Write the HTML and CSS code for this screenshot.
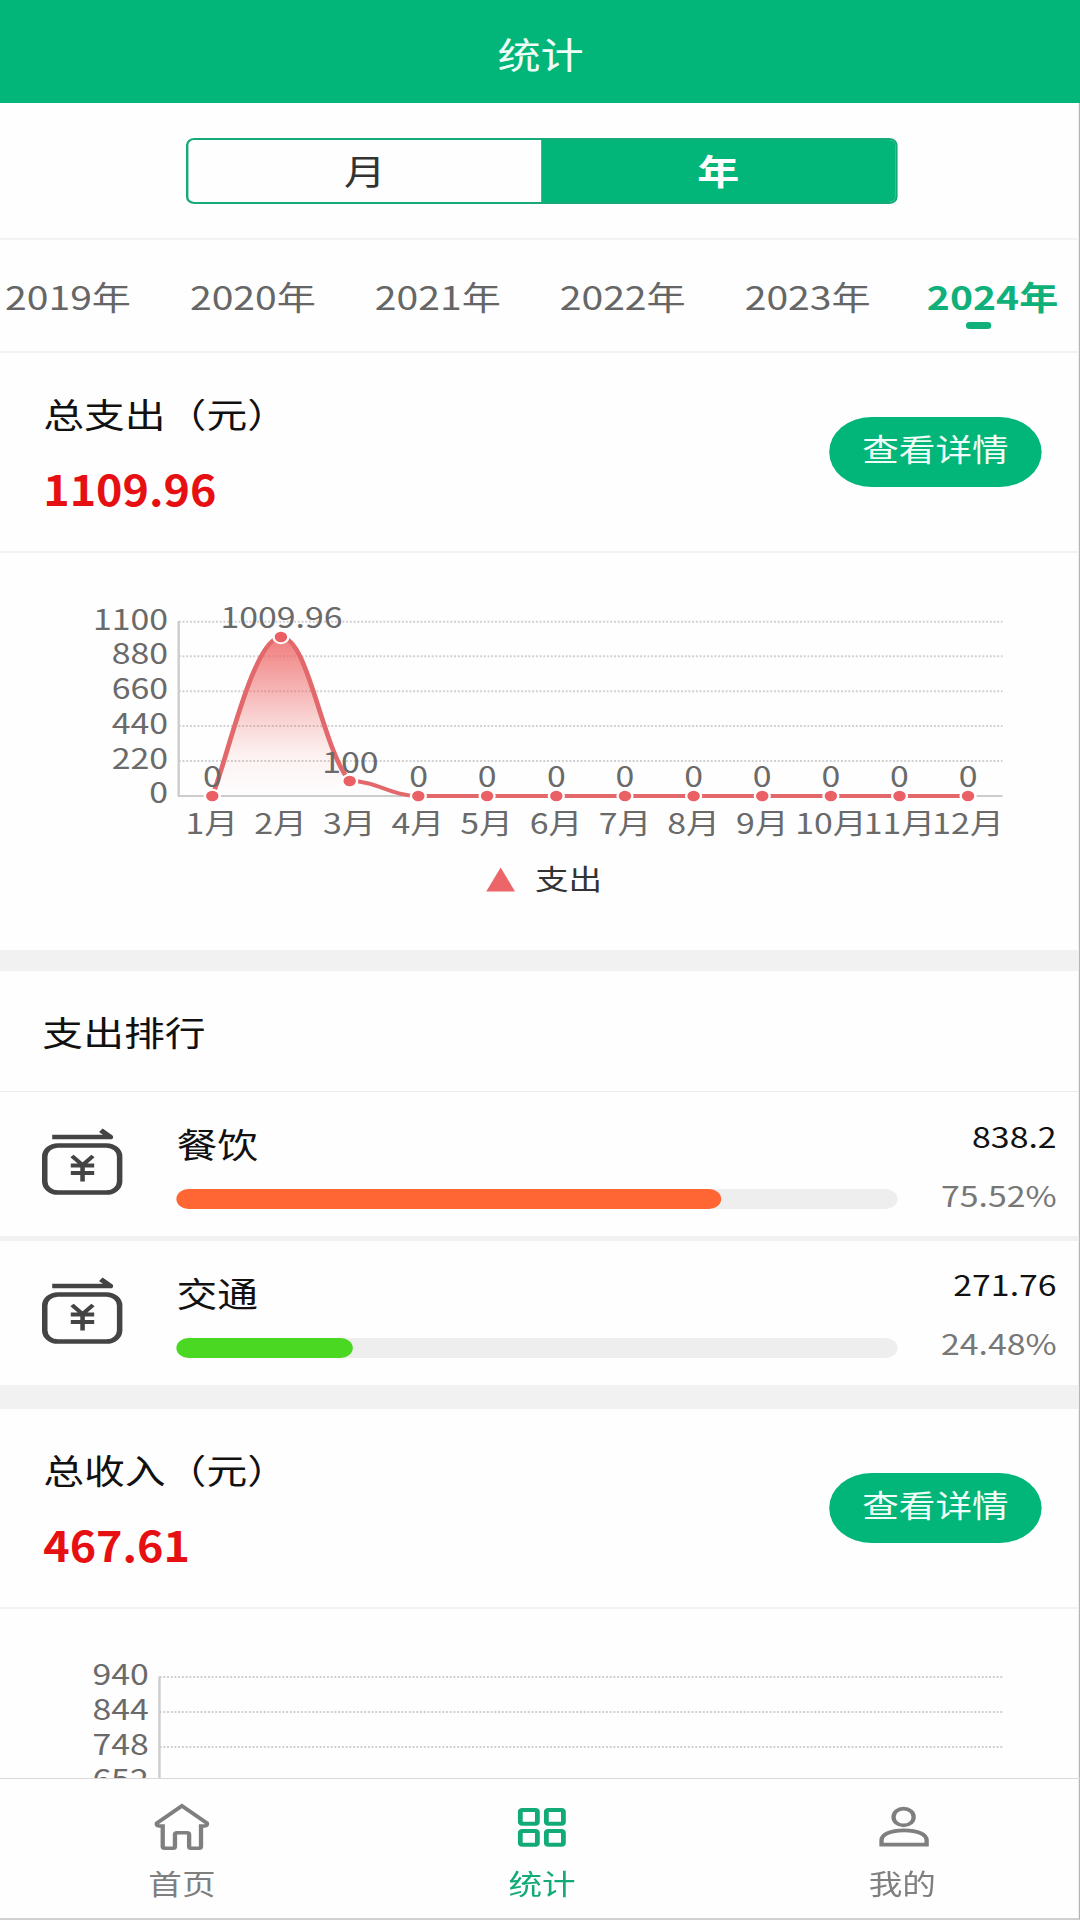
FILE: index.html
```html
<!DOCTYPE html>
<html lang="zh-CN">
<head>
<meta charset="UTF-8">
<title>统计</title>
<link rel="stylesheet" href="styles.css">
</head>
<body>
<div class="app">
  <header class="navbar">统计</header>

  <main class="content">
    <div class="switch">
      <div class="segment">
        <div class="segment-item">月</div>
        <div class="segment-item active">年</div>
      </div>
    </div>

    <nav class="years">
      <span class="year">2019年</span>
      <span class="year">2020年</span>
      <span class="year">2021年</span>
      <span class="year">2022年</span>
      <span class="year">2023年</span>
      <span class="year active">2024年</span>
    </nav>

    <section class="summary">
      <div class="summary-text">
        <div class="summary-title">总支出（元）</div>
        <div class="summary-amount">1109.96</div>
      </div>
      <div class="detail-btn">查看详情</div>
    </section>

    <section class="chart">
      <svg class="chart-svg" width="900" height="397" viewBox="0 0 900 397">
        <defs>
          <linearGradient id="area" x1="0" y1="84" x2="0" y2="243" gradientUnits="userSpaceOnUse">
            <stop offset="0" stop-color="#ee6666" stop-opacity="0.85"/>
            <stop offset="0.5" stop-color="#ee6666" stop-opacity="0.3"/>
            <stop offset="0.75" stop-color="#ee6666" stop-opacity="0.08"/>
            <stop offset="1" stop-color="#ee6666" stop-opacity="0"/>
          </linearGradient>
        </defs>
        <g class="grid">
          <path d="M149 68.7H835.4M149 103.2H835.4M149 138.2H835.4M149 173H835.4M149 208H835.4"/>
        </g>
        <path class="axis" d="M148.9 68V243H835.4"/>
        <g class="label end">
          <text x="140" y="77">1100</text>
          <text x="140" y="111.3">880</text>
          <text x="140" y="145.8">660</text>
          <text x="140" y="180.7">440</text>
          <text x="140" y="215.7">220</text>
          <text x="140" y="250.4">0</text>
        </g>
        <path fill="url(#area)" d="M176.9 243C188.3 211 211.2 84 234.1 84C257 84 268.5 196.2 291.4 228C314.3 228 325.7 243 348.6 243Z"/>
        <path class="curve" d="M176.9 243C188.3 211 211.2 84 234.1 84C257 84 268.5 196.2 291.4 228C314.3 228 325.7 243 348.6 243H806.6"/>
        <g class="dots">
          <circle cx="176.9" cy="243" r="6.2"/>
          <circle cx="234.1" cy="84" r="6.2"/>
          <circle cx="291.4" cy="228" r="6.2"/>
          <circle cx="348.6" cy="243" r="6.2"/>
          <circle cx="405.9" cy="243" r="6.2"/>
          <circle cx="463.6" cy="243" r="6.2"/>
          <circle cx="520.8" cy="243" r="6.2"/>
          <circle cx="578" cy="243" r="6.2"/>
          <circle cx="635.2" cy="243" r="6.2"/>
          <circle cx="692.4" cy="243" r="6.2"/>
          <circle cx="749.6" cy="243" r="6.2"/>
          <circle cx="806.7" cy="243" r="6.2"/>
        </g>
        <g class="label mid">
          <text x="177" y="233.7">0</text>
          <text x="234.6" y="75.3">1009.96</text>
          <text x="291.9" y="219.7">100</text>
          <text x="348.8" y="233.7">0</text>
          <text x="405.9" y="233.7">0</text>
          <text x="463.6" y="233.7">0</text>
          <text x="520.8" y="233.7">0</text>
          <text x="578" y="233.7">0</text>
          <text x="635.2" y="233.7">0</text>
          <text x="692.4" y="233.7">0</text>
          <text x="749.6" y="233.7">0</text>
          <text x="806.7" y="233.7">0</text>
        </g>
        <g class="label mid">
          <text x="176.5" y="281.3">1月</text>
          <text x="233.8" y="281.3">2月</text>
          <text x="291" y="281.3">3月</text>
          <text x="348.2" y="281.3">4月</text>
          <text x="405.5" y="281.3">5月</text>
          <text x="463.3" y="281.3">6月</text>
          <text x="520.8" y="281.3">7月</text>
          <text x="578" y="281.3">8月</text>
          <text x="635.2" y="281.3">9月</text>
          <text x="692.4" y="281.3">10月</text>
          <text x="749.6" y="281.3">11月</text>
          <text x="806.7" y="281.3">12月</text>
        </g>
        <path class="marker" d="M417.2 314.5L429.2 338.5H405.2Z"/>
        <text class="legend" x="445.8" y="337">支出</text>
      </svg>
    </section>

    <section class="rank">
      <h2 class="rank-title">支出排行</h2>
      <div class="rank-row">
        <svg class="rank-icon" width="68" height="72" viewBox="0 0 68 72">
          <rect x="2.3" y="19.5" width="62.4" height="47" rx="11"/>
          <path d="M8.5 11H57L49 4.2"/>
          <path class="yen" d="M25 30L33.8 39L42.5 30M24 39.5H43.5M24 47H43.5M33.8 39V55.5"/>
        </svg>
        <div class="rank-main">
          <div class="rank-name">餐饮</div>
          <div class="bar"><div class="bar-fill orange" style="width:75.52%"></div></div>
        </div>
        <div class="rank-nums">
          <div class="rank-amount">838.2</div>
          <div class="rank-pct">75.52%</div>
        </div>
      </div>
      <div class="rank-row">
        <svg class="rank-icon" width="68" height="72" viewBox="0 0 68 72">
          <rect x="2.3" y="19.5" width="62.4" height="47" rx="11"/>
          <path d="M8.5 11H57L49 4.2"/>
          <path class="yen" d="M25 30L33.8 39L42.5 30M24 39.5H43.5M24 47H43.5M33.8 39V55.5"/>
        </svg>
        <div class="rank-main">
          <div class="rank-name">交通</div>
          <div class="bar"><div class="bar-fill green" style="width:24.48%"></div></div>
        </div>
        <div class="rank-nums">
          <div class="rank-amount">271.76</div>
          <div class="rank-pct">24.48%</div>
        </div>
      </div>
    </section>

    <section class="summary">
      <div class="summary-text">
        <div class="summary-title">总收入（元）</div>
        <div class="summary-amount">467.61</div>
      </div>
      <div class="detail-btn">查看详情</div>
    </section>

    <section class="chart income">
      <svg class="chart-svg" width="900" height="397" viewBox="0 0 900 397">
        <g class="grid">
          <path d="M133 68H835.4M133 103H835.4M133 138H835.4"/>
        </g>
        <path class="axis" d="M132.9 67.5V243"/>
        <g class="label end">
          <text x="124" y="76">940</text>
          <text x="124" y="111.3">844</text>
          <text x="124" y="145.8">748</text>
          <text x="124" y="180.7">652</text>
        </g>
      </svg>
    </section>
  </main>

  <footer class="tabbar">
    <div class="tab">
      <svg class="tab-icon" width="48" height="48" viewBox="1.2 0 48 48">
        <path d="M24.8 2.8L45.6 20Q46.6 22.6 43.5 23H40.7V43.5Q40.7 45.3 39 45.3H32.3Q30.8 45.3 30.8 43.5V31.5Q30.8 29.8 29.2 29.8H20.6Q19 29.8 19 31.5V43.5Q19 45.3 17.4 45.3H10.5Q8.8 45.3 8.8 43.5V23H6Q2.9 22.6 4 20Z"/>
      </svg>
      <span class="tab-label">首页</span>
    </div>
    <div class="tab active">
      <svg class="tab-icon" width="48" height="48" viewBox="1.4 0 48 48">
        <rect x="7" y="6.9" width="14.2" height="13.8" rx="1.5"/>
        <rect x="28.7" y="6.9" width="14.2" height="13.8" rx="1.5"/>
        <rect x="7" y="27.9" width="14.2" height="13.8" rx="1.5"/>
        <rect x="28.7" y="27.9" width="14.2" height="13.8" rx="1.5"/>
      </svg>
      <span class="tab-label">统计</span>
    </div>
    <div class="tab">
      <svg class="tab-icon" width="48" height="48" viewBox="1.2 0 48 48">
        <circle cx="26.2" cy="14" r="8.4"/>
        <path d="M7.8 41.6V37.5C7.8 31.5 15 27.4 26.6 27.4S45.4 31.5 45.4 37.5V41.6Z"/>
      </svg>
      <span class="tab-label">我的</span>
    </div>
  </footer>
</div>
</body>
</html>
```
FILE: styles.css
```css
* {
  box-sizing: border-box;
}

html,
body {
  margin: 0;
  width: 1080px;
  height: 1920px;
  overflow: hidden;
  background: #fefefe;
}

/* The layout is designed 900 wide and stretched to fill the 1080 screen. */
.app {
  width: 900px;
  height: 1920px;
  display: flex;
  flex-direction: column;
  transform: scaleX(1.2);
  transform-origin: 0 0;
  background: #fefefe;
  border-right: 1px solid #b5b5b5;
  border-bottom: 2px solid #d0d0d0;
  font-family: "Noto Sans CJK SC", "Noto Sans", sans-serif;
  font-size: 34px;
  color: #111;
  white-space: nowrap;
}

.navbar {
  flex: none;
  height: 103px;
  margin-right: -1px;
  padding: 3px 0 0 1px;
  line-height: 101px;
  text-align: center;
  font-size: 36px;
  color: #eefff8;
  background: #02b578;
}

.content {
  flex: 1;
  min-height: 0;
  overflow: hidden;
  display: flex;
  flex-direction: column;
}

.content > * {
  flex: none;
}

.switch {
  height: 135px;
  padding: 35px 0 0 155px;
}

.segment {
  display: flex;
  width: 592.5px;
  height: 65.5px;
  border: 2px solid #14ab79;
  border-radius: 7px;
  overflow: hidden;
}

.segment-item {
  flex: 1;
  line-height: 60px;
  text-align: center;
  color: #333;
  font-size: 35px;
}

.segment-item.active {
  background: #02b578;
  color: #fff;
  font-weight: 700;
  padding-left: 1px;
}

.years {
  display: flex;
  height: 115px;
  border-top: 2px solid #f3f3f3;
  border-bottom: 2px solid #f3f3f3;
  margin-left: -20.4px;
}

.year {
  position: relative;
  flex: none;
  width: 154.1px;
  line-height: 111px;
  text-align: center;
  font-size: 32.6px;
  color: #666;
}

.year.active {
  color: #0fb07a;
  font-weight: 700;
}

.year.active::after {
  content: "";
  position: absolute;
  left: 54.5px;
  bottom: 22px;
  width: 21.5px;
  height: 7px;
  border-radius: 3px;
  background: #0fb07a;
}

.summary {
  display: flex;
  justify-content: space-between;
  height: 200px;
  padding: 41px 31px 0 36px;
  border-bottom: 2px solid #f3f3f3;
}

.summary-title {
  line-height: 40px;
}

.summary-amount {
  margin-top: 29px;
  line-height: 50px;
  font-size: 41.5px;
  font-weight: 700;
  color: #e60f12;
  transform: scaleX(0.9);
  transform-origin: 0 0;
}

.detail-btn {
  width: 177px;
  height: 70px;
  margin-top: 23px;
  border-radius: 35px;
  background: #02b578;
  color: #effff8;
  font-size: 30.5px;
  line-height: 63px;
  text-align: center;
}

.chart {
  height: 397px;
}

.chart.income {
  height: 170px;
  overflow: hidden;
}

.chart-svg {
  display: block;
}

.grid path {
  fill: none;
  stroke: #cfcfcf;
  stroke-width: 2;
  stroke-dasharray: 1.6 1.5;
}

.axis {
  fill: none;
  stroke: #ccc;
  stroke-width: 2;
}

.curve {
  fill: none;
  stroke: #e2686b;
  stroke-width: 4;
}

.dots circle {
  fill: #ea6064;
  stroke: #fff;
  stroke-width: 2;
}

.label {
  font-size: 28.2px;
  fill: #6a6a6a;
}

.label.end {
  text-anchor: end;
}

.label.mid {
  text-anchor: middle;
}

.marker {
  fill: #ec6669;
}

.legend {
  font-size: 28px;
  fill: #333;
}

.rank {
  border-top: 21px solid #f1f1f1;
  border-bottom: 24px solid #f1f1f1;
}

.rank-title {
  margin: 0;
  padding-left: 35.3px;
  height: 121px;
  line-height: 122px;
  font-size: 34px;
  font-weight: 400;
  border-bottom: 1px solid #ececec;
}

.rank-row {
  display: flex;
  height: 144px;
  padding: 0 18.5px 0 35px;
}

.rank-row + .rank-row {
  height: 149px;
  border-top: 5px solid #f1f1f1;
}

.rank-icon {
  flex: none;
  margin-top: 34px;
  fill: none;
  stroke: #444;
  stroke-width: 4.6;
  stroke-linejoin: round;
}

.rank-icon .yen {
  stroke-width: 3.8;
}

.rank-main {
  width: 601.2px;
  margin-left: 44px;
  padding-top: 32px;
}

.rank-name {
  line-height: 40px;
}

.bar {
  height: 20px;
  margin-top: 25px;
  border-radius: 10px;
  background: #eee;
}

.bar-fill {
  height: 100%;
  border-radius: 10px;
}

.orange {
  background: #ff6633;
}

.green {
  background: #4ad823;
}

.rank-nums {
  margin-left: auto;
  padding-top: 27px;
  text-align: right;
  font-size: 28.2px;
  line-height: 34px;
}

.rank-row + .rank-row .rank-nums {
  padding-top: 26px;
}

.rank-pct {
  margin-top: 24.5px;
  color: #777;
}

.tabbar {
  flex: none;
  display: flex;
  height: 140px;
  margin-right: -3px;
  padding-left: 1.5px;
  border-top: 1px solid #d9d9d9;
}

.tab {
  flex: 1;
  display: flex;
  flex-direction: column;
  align-items: center;
  padding-top: 24px;
  color: #7f7f7f;
}

.tab.active {
  color: #12aa76;
}

.tab-icon {
  fill: none;
  stroke: currentColor;
  stroke-width: 3.6;
}

.tab.active .tab-icon {
  stroke-width: 4;
}

.tab-label {
  margin-top: 12px;
  line-height: 40px;
  font-size: 28px;
}
```
